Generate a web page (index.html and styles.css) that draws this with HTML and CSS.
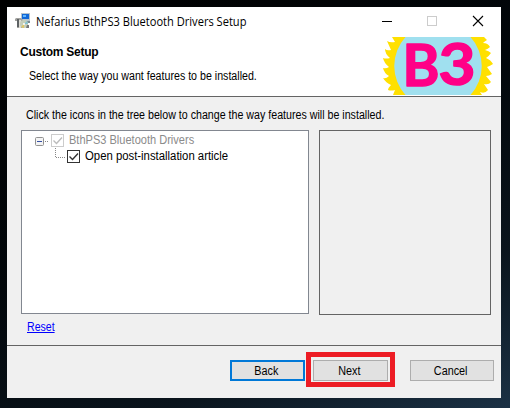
FILE: index.html
```html
<!DOCTYPE html>
<html lang="en">
<head>
<meta charset="utf-8">
<title>Nefarius BthPS3 Bluetooth Drivers Setup</title>
<link rel="stylesheet" href="styles.css">
</head>
<body>
<main class="window">
  <header class="titlebar">
    <svg class="app-icon" width="16" height="16" viewBox="0 0 16 16">
      <path d="M6 0h9v8H6z" fill="#b9c4cc"/><path d="M7 1h7v5H7z" fill="#1268d8"/><path d="M8 2h3v2H8z" fill="#63b8ff"/>
      <path d="M6 8h9v2h-3v2H9v-2H6z" fill="#7d8992"/>
      <path d="M1 5h5l2 2v8H2V8H0V6z" fill="#a3a3a0"/><path d="M2 6h2v8H2z" fill="#5e6264"/><path d="M4 7h2v8H4z" fill="#deddd6"/>
      <circle cx="9" cy="11" r="4" fill="#c5cdb9"/><path d="M9 11l3-3 1 3z" fill="#7fc3d4"/><path d="M9 11l-3 3 3 1z" fill="#e0c661"/><circle cx="9" cy="11" r="1" fill="#fff"/>
      <path d="M12 12h2v3h-3z" fill="#777"/>
    </svg>
    <h1 class="title">Nefarius BthPS3 Bluetooth Drivers Setup</h1>
    <svg class="controls" width="110" height="16" viewBox="0 0 110 16" fill="none">
      <path d="M1 8.500h10" stroke="#000"/>
      <rect x="46.500" y="3.500" width="9" height="9" stroke="#ccc"/>
      <path d="M92 3l10 10M102 3l-10 10" stroke="#000" stroke-width="1.100"/>
    </svg>
  </header>
  <section class="banner">
    <div class="heading">
      <h2>Custom Setup</h2>
      <p class="subtitle">Select the way you want features to be installed.</p>
    </div>
    <svg class="logo" width="112" height="58" viewBox="382 37 112 58">
      <path fill="#ffe000" d="M392 37L395 42Q390 43 387 41L391 50Q387 51 385 49Q385 54 390 58Q386 59 383 58Q384 63 389 67Q386 69 383 68Q384 73 389 76Q386 79 383 78Q386 83 391 85Q388 88 388 90Q391 91 395 90L393 95H482L480 92Q485 94 488 90L484 84Q489 85 491 82L486 76Q489 76 492 74L487 67Q490 66 493 64Q491 60 486 58Q489 56 491 53Q489 51 485 50Q488 49 490 47Q488 43 483 43Q485 41 487 40L484 37z"/>
      <path fill="#a0e0ef" d="M405.500 37H470.500A43 43 0 0 1 470.500 95H405.500A43 43 0 0 1 405.500 37z"/>
      <g class="logo-text"><text x="402.500" y="86" textLength="37" lengthAdjust="spacingAndGlyphs">B</text><text x="438.500" y="85" textLength="37" lengthAdjust="spacingAndGlyphs">3</text></g>
    </svg>
  </section>
  <section class="content">
    <p class="hint">Click the icons in the tree below to change the way features will be installed.</p>
    <div class="panels">
      <div class="tree">
        <div class="node parent">
          <svg width="30" height="16" viewBox="0 0 30 16" fill="none"><rect x=".5" y="5.500" width="8" height="8" rx="1" fill="#f4f4f4" stroke="#919191"/><path d="M2 9.500h5" stroke="#3550a5"/><path d="M10 9.500h4" stroke="#888" stroke-dasharray="1 1"/><rect x="16.500" y="2.500" width="12" height="12" stroke="#ccc"/><path d="M18.500 8.500l3 3 5.500-6" stroke="#bbb" stroke-width="1.400"/></svg>
          <span class="parent-label">BthPS3 Bluetooth Drivers</span>
        </div>
        <div class="node child">
          <svg width="26" height="16" viewBox="0 0 26 16" fill="none"><path d="M.5 0v9.500H10" stroke="#888" stroke-dasharray="1 1"/><rect x="12.500" y="2.500" width="12" height="12" stroke="#333"/><path d="M14.500 8.500l3 3 5.500-6" stroke="#333" stroke-width="1.400"/></svg>
          <span class="child-label">Open post-installation article</span>
        </div>
      </div>
      <div class="description"></div>
    </div>
    <a class="reset" href="#">Reset</a>
  </section>
  <footer class="footer">
    <button class="button back"><span class="label">Back</span></button>
    <div class="highlight"><button class="button next"><span class="label">Next</span></button></div>
    <button class="button cancel"><span class="label">Cancel</span></button>
  </footer>
</main>
</body>
</html>
```
FILE: styles.css
```css
* { box-sizing: border-box; }
body { margin: 0; width: 510px; height: 408px; padding: 7px; overflow: hidden; background: linear-gradient(155deg, #000 0%, #02070b 45%, #0a141c 75%, #1b3145 100%); font: 12px/16px "Liberation Sans", sans-serif; color: #000; }
h1, h2, p { margin: 0; white-space: nowrap; }
svg { display: block; flex: none; }
.window { width: 494px; height: 391px; background: #f0f0f0; display: flex; flex-direction: column; }
.titlebar { height: 30px; background: #fff; display: flex; padding: 6px 10px 0 8px; }
.title { font: 12px/18px "Open Sans", sans-serif; margin-left: 5px; width: 228px; transform: scaleX(.925); transform-origin: 0 0; }
.controls { margin-left: auto; }
.banner { height: 60px; flex: none; background: #fff; border-bottom: 1px solid #646464; display: flex; justify-content: space-between; padding: 0 7px 0 13px; }
.heading h2 { font: bold 12px/16px "Liberation Sans", sans-serif; padding-top: 7px; letter-spacing: -.25px; }
.subtitle { margin: 8px 0 0 9px; transform: scaleX(.887); transform-origin: 0 0; }
.logo { overflow: visible; }
.logo-text { font: 700 57px Lato, sans-serif; fill: #ff0087; stroke: #ff0087; stroke-width: 1.500px; stroke-linejoin: round; }
.content { height: 249px; padding: 10px 10px 0 14px; }
.hint { margin-left: 5px; transform: scaleX(.888); transform-origin: 0 0; }
.panels { display: flex; justify-content: space-between; margin-top: 7px; }
.tree { width: 288px; height: 184px; border: 1px solid #828790; background: #fff; padding: 1px 0 0 13px; }
.node { display: flex; white-space: nowrap; gap: 4px; }
.node span { transform-origin: 0 0; }
.parent { color: #8b8b8b; }
.parent-label { transform: scaleX(.92); }
.child { padding-left: 20px; }
.child-label { transform: scaleX(.945); }
.description { width: 172px; height: 185px; border: 1px solid #646464; }
.reset { display: inline-block; margin: 4px 0 0 6px; color: #00f; transform: scaleX(.88); transform-origin: 0 0; }
.footer { height: 53px; border-top: 1px solid #646464; display: flex; padding: 6px 7px 0 223px; }
.button { display: block; height: 21px; width: 75px; padding: 0 3px 0 0; border: 1px solid #adadad; background: #e1e1e1; font: 12px/18px "Liberation Sans", sans-serif; color: #000; }
.label { display: inline-block; transform: scaleX(.9); }
.back { margin-top: 8px; border: 2px solid #0078d7; }
.highlight { width: 89px; height: 35px; border: 5px solid #ed1c24; margin-left: 1px; padding: 3px 2px; }
.cancel { width: 84px; margin: 8px 0 0 15px; }
```
